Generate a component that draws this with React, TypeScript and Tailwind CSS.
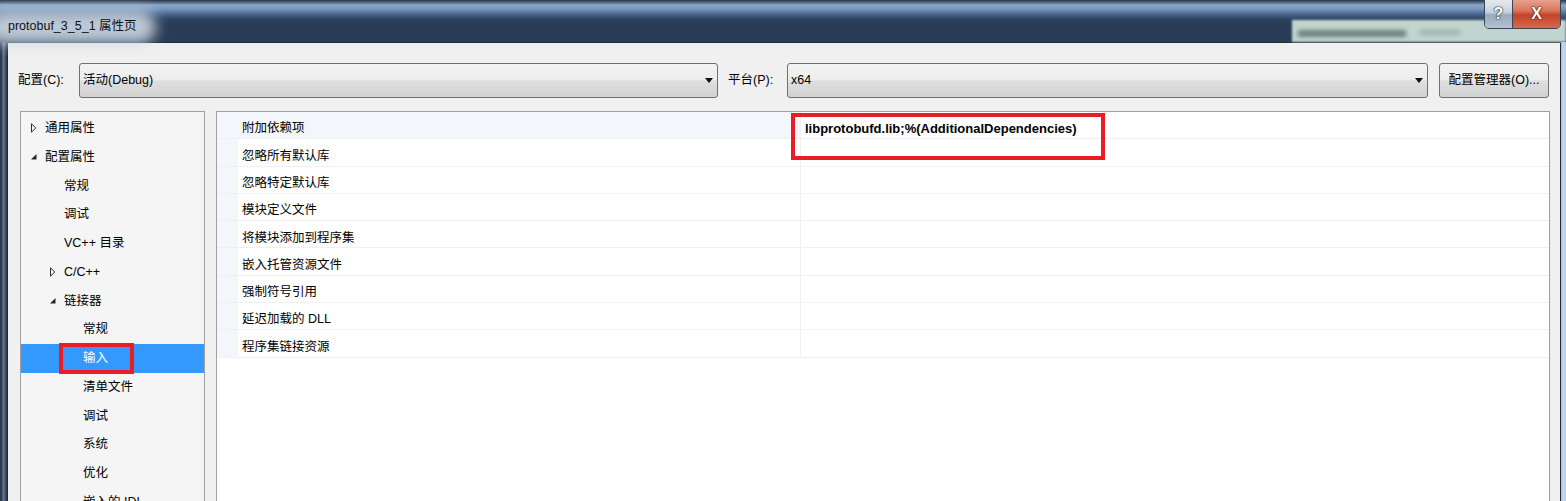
import React from "react";

type TreeItem = { l: number; t: string; a?: "c" | "e"; sel?: boolean };

const tree: TreeItem[] = [
  { l: 0, t: "通用属性", a: "c" },
  { l: 0, t: "配置属性", a: "e" },
  { l: 1, t: "常规" },
  { l: 1, t: "调试" },
  { l: 1, t: "VC++ 目录" },
  { l: 1, t: "C/C++", a: "c" },
  { l: 1, t: "链接器", a: "e" },
  { l: 2, t: "常规" },
  { l: 2, t: "输入", sel: true },
  { l: 2, t: "清单文件" },
  { l: 2, t: "调试" },
  { l: 2, t: "系统" },
  { l: 2, t: "优化" },
  { l: 2, t: "嵌入的 IDL" },
];

const props = [
  "附加依赖项",
  "忽略所有默认库",
  "忽略特定默认库",
  "模块定义文件",
  "将模块添加到程序集",
  "嵌入托管资源文件",
  "强制符号引用",
  "延迟加载的 DLL",
  "程序集链接资源",
];

const padByLevel = ["pl-[10px]", "pl-[29px]", "pl-[48px]"];

function Collapsed() {
  return (
    <svg width="6" height="10" viewBox="0 0 6 10">
      <path d="M0.5 0.8 L4.8 5 L0.5 9.2 Z" fill="none" stroke="#2a2a2a" strokeWidth="1" />
    </svg>
  );
}

function Expanded() {
  return (
    <svg width="6" height="6" viewBox="0 0 6 6">
      <path d="M5.5 0 L5.5 5.5 L0 5.5 Z" fill="#262626" />
    </svg>
  );
}

function DownArrow() {
  return (
    <svg width="8" height="5" viewBox="0 0 8 5">
      <path d="M0 0 L8 0 L4 5 Z" fill="#111" />
    </svg>
  );
}

function Combo({ text, w }: { text: string; w: string }) {
  return (
    <div
      className={`${w} h-[35px] shrink-0 border border-[#707070] rounded-[3px] bg-[linear-gradient(to_bottom,#f3f3f3_0%,#ececec_48%,#dedede_52%,#d2d2d2_100%)] flex items-center pl-[3px] pr-[4px]`}
    >
      <span className="flex-1 text-[12.5px] leading-none">{text}</span>
      <DownArrow />
    </div>
  );
}

export default function App() {
  return (
    <div className="w-[1566px] h-[501px] overflow-hidden flex flex-col bg-[#283c55] font-['Liberation_Sans','Noto_Sans_CJK_SC',sans-serif] text-[12.5px] text-black">
      {/* Title bar */}
      <div className="relative h-[42px] shrink-0 bg-[linear-gradient(to_bottom,#27384d_0px,#4b5e75_2px,#8ba6c6_5px,#7896bb_9px,#4a6890_14px,#2e4562_19px,#283c55_24px,#283c55_100%)]">
        <div className="absolute left-[-14px] top-[10px] w-[170px] h-[34px] rounded-full bg-[#cdd8e4] blur-[7px] opacity-90" />
        <div className="absolute left-[1292px] top-[20px] w-[274px] h-[22px] bg-[#c2d4ce] blur-[1px]" />
        <div className="absolute left-[1298px] top-[30px] w-[108px] h-[7px] bg-[#6f827c] blur-[2px]" />
        <div className="absolute left-[1420px] top-[30px] w-[40px] h-[5px] bg-[#9fb1ab] blur-[2px]" />
        <div className="relative pl-[8px] pt-[18px] text-[12.5px] leading-[16px] text-[#111]">
          protobuf_3_5_1 属性页
        </div>
        {/* caption buttons */}
        <div className="absolute left-[1484px] top-[-2px] h-[31px] flex border border-[#3a4658] rounded-b-[5px] overflow-hidden">
          <div className="w-[28px] h-full bg-[linear-gradient(to_bottom,#e6ebf1_0%,#c9d3de_45%,#9aaabd_55%,#b3c2d1_100%)] border-r border-[#3a4658] flex items-center justify-center">
            <span className="text-[16px] font-bold leading-none text-white [text-shadow:0_0_1px_#2a3442,0_0_1px_#2a3442,0_0_2px_#2a3442]">
              ?
            </span>
          </div>
          <div className="w-[47px] h-full bg-[linear-gradient(to_bottom,#e8a591_0%,#d9775c_40%,#c4432a_55%,#d4694c_100%)] flex items-center justify-center">
            <span className="text-[16px] font-bold leading-none text-white [text-shadow:0_0_1px_#4a1a12,0_0_1px_#4a1a12,0_0_2px_#4a1a12]">
              X
            </span>
          </div>
        </div>
      </div>

      {/* Body */}
      <div className="flex flex-1 min-h-0">
        <div className="w-[7px] shrink-0 bg-[linear-gradient(to_right,#2b3b50_0px,#2b3b50_2px,#6d7f96_3px,#4a5c73_5px,#22324a_7px)]" />
        <div className="flex-1 min-w-0 bg-[#f0f0f0] border-l border-t border-r border-[#1e2c3e] flex flex-col">
          {/* combo row */}
          <div className="flex items-center pt-[20px] pl-[10px]">
            <span className="w-[61px] shrink-0 leading-none">配置(C):</span>
            <Combo text="活动(Debug)" w="w-[639px]" />
            <span className="w-[69px] shrink-0 pl-[10px] leading-none">平台(P):</span>
            <Combo text="x64" w="w-[641px]" />
            <div className="ml-[11px] w-[110px] h-[35px] shrink-0 border border-[#707070] rounded-[3px] bg-[linear-gradient(to_bottom,#f3f3f3_0%,#ececec_48%,#dedede_52%,#d2d2d2_100%)] flex items-center justify-center leading-none">
              配置管理器(O)...
            </div>
          </div>

          {/* panels */}
          <div className="flex flex-1 min-h-0 mt-[13px] pl-[12px]">
            {/* tree */}
            <div className="w-[185px] shrink-0 h-[420px] border border-[#a0a0a0] bg-[#f5f5f5] pt-[2px]">
              {tree.map((it, i) => (
                <div
                  key={i}
                  className={`relative h-[28.75px] flex items-center ${padByLevel[it.l]} ${
                    it.sel ? "bg-[#3399ff] text-white" : ""
                  }`}
                >
                  <div className="w-[14px] shrink-0 flex items-center">
                    {it.a === "c" ? <Collapsed /> : it.a === "e" ? <Expanded /> : null}
                  </div>
                  <span className="leading-none whitespace-nowrap">{it.t}</span>
                  {it.sel && (
                    <div className="absolute left-[38px] top-[-1px] w-[75px] h-[31px] border-[4px] border-[#ec1c24]" />
                  )}
                </div>
              ))}
            </div>

            {/* property grid */}
            <div className="relative ml-[11px] w-[1334px] shrink-0 h-[420px] border border-[#a0a0a0] bg-white">
              <div className="flex flex-col">
                {props.map((p, i) => (
                  <div key={i} className="flex h-[27.3px] border-b border-[#f0f0f0]">
                    <div className="w-[21px] shrink-0 bg-[#f3f6fb]" />
                    <div
                      className={`w-[563px] shrink-0 flex items-center pl-[4px] pt-[7px] border-r border-[#f0f0f0] ${
                        i === 0 ? "bg-[#f3f6fb]" : ""
                      }`}
                    >
                      <span className="leading-none whitespace-nowrap">{p}</span>
                    </div>
                    <div className="flex-1 flex items-center pl-[4px] pt-[7px]">
                      {i === 0 && (
                        <span className="font-bold text-[13px] leading-none whitespace-nowrap">
                          libprotobufd.lib;%(AdditionalDependencies)
                        </span>
                      )}
                    </div>
                  </div>
                ))}
              </div>
              <div className="absolute left-[574px] top-[1px] w-[314px] h-[47px] border-[4px] border-[#ec1c24]" />
            </div>
          </div>
        </div>
        <div className="w-[5px] shrink-0 bg-[linear-gradient(to_right,#9fbbdc_0px,#c6daf0_2px,#b4cce6_5px)]" />
      </div>
    </div>
  );
}
